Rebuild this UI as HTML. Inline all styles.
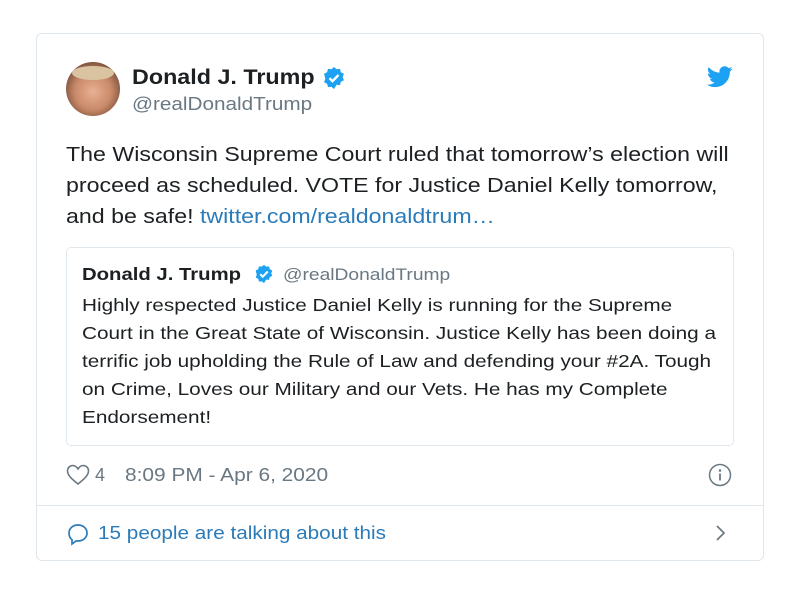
<!DOCTYPE html>
<html><head><meta charset="utf-8"><style>
body{margin:0;width:799px;height:595px;background:#fff;font-family:"Liberation Sans",sans-serif;position:relative;overflow:hidden}
.card{position:absolute;left:36px;top:33px;width:726px;height:526px;border:1px solid #e1e8ed;border-radius:6px}
.a{position:absolute;white-space:nowrap;transform-origin:0 0}
</style></head><body>
<div class="card"></div>
<div class="a" style="left:66px;top:62px;width:54px;height:54px;border-radius:50%;background:radial-gradient(circle at 50% 55%,#e8b193 0%,#c98a6a 45%,#8a5a44 70%,#5a4038 100%)"><div style="position:absolute;left:6px;top:4px;width:42px;height:14px;border-radius:50%;background:#d9c3a0"></div></div>
<div class="a" style="left:132px;top:66px;font-size:21px;font-weight:bold;color:#1c2022;transform:scaleX(1.11)">Donald J. Trump</div>
<svg class="a" style="left:322px;top:66px" width="24" height="24" viewBox="0 0 24 24"><path fill="#1da1f2" d="M12 1l2.6 2.2 3.4-.3.9 3.3 3 1.6-1.2 3.2 1.2 3.2-3 1.6-.9 3.3-3.4-.3L12 23l-2.6-2.2-3.4.3-.9-3.3-3-1.6 1.2-3.2L2.1 7.8l3-1.6.9-3.3 3.4.3z"/><path d="M7.5 12.2l3 3 6-6.2" stroke="#fff" stroke-width="2.4" fill="none"/></svg>
<div class="a" style="left:132px;top:94px;font-size:18px;color:#697882;transform:scaleX(1.15)">@realDonaldTrump</div>
<svg class="a" style="left:707px;top:66px" width="26" height="22" viewBox="0 0 24 20"><path fill="#1da1f2" d="M23.6 2.4c-.9.4-1.8.6-2.8.8 1-.6 1.8-1.6 2.1-2.7-.9.6-2 1-3.1 1.2C18.9.7 17.6.1 16.3.1c-2.7 0-4.8 2.2-4.8 4.8 0 .4 0 .8.1 1.1C7.5 5.8 4 3.9 1.6.9c-.4.7-.7 1.6-.7 2.4 0 1.7.9 3.2 2.2 4-.8 0-1.5-.2-2.2-.6v.1c0 2.3 1.7 4.3 3.9 4.7-.4.1-.8.2-1.3.2-.3 0-.6 0-.9-.1.6 1.9 2.4 3.3 4.5 3.4-1.7 1.3-3.7 2.1-6 2.1H0c2.1 1.4 4.7 2.2 7.4 2.2 8.9 0 13.7-7.4 13.7-13.7v-.6c1-.7 1.8-1.6 2.5-2.6z"/></svg>
<div class="a" style="left:66px;top:139px;font-size:20.5px;line-height:31px;color:#1c2022;transform:scaleX(1.13)">The Wisconsin Supreme Court ruled that tomorrow’s election will</div>
<div class="a" style="left:66px;top:170px;font-size:20.5px;line-height:31px;color:#1c2022;transform:scaleX(1.13)">proceed as scheduled. VOTE for Justice Daniel Kelly tomorrow,</div>
<div class="a" style="left:66px;top:201px;font-size:20.5px;line-height:31px;color:#1c2022;transform:scaleX(1.13)">and be safe! <span style="color:#2b7bb9">twitter.com/realdonaldtrum…</span></div>
<div class="a" style="left:66px;top:247px;width:666px;height:197px;border:1px solid #e1e8ed;border-radius:5px"></div>
<div class="a" style="left:82px;top:264px;font-size:17.5px;font-weight:bold;color:#1c2022;transform:scaleX(1.16)">Donald J. Trump</div>
<svg class="a" style="left:254px;top:264px" width="20" height="20" viewBox="0 0 24 24"><path fill="#1da1f2" d="M12 1l2.6 2.2 3.4-.3.9 3.3 3 1.6-1.2 3.2 1.2 3.2-3 1.6-.9 3.3-3.4-.3L12 23l-2.6-2.2-3.4.3-.9-3.3-3-1.6 1.2-3.2L2.1 7.8l3-1.6.9-3.3 3.4.3z"/><path d="M7.5 12.2l3 3 6-6.2" stroke="#fff" stroke-width="2.4" fill="none"/></svg>
<div class="a" style="left:283px;top:265px;font-size:17px;color:#697882;transform:scaleX(1.13)">@realDonaldTrump</div>
<div class="a" style="left:82px;top:291px;font-size:17.3px;line-height:28px;color:#1c2022;transform:scaleX(1.2)">Highly respected Justice Daniel Kelly is running for the Supreme</div>
<div class="a" style="left:82px;top:319px;font-size:17.3px;line-height:28px;color:#1c2022;transform:scaleX(1.2)">Court in the Great State of Wisconsin. Justice Kelly has been doing a</div>
<div class="a" style="left:82px;top:347px;font-size:17.3px;line-height:28px;color:#1c2022;transform:scaleX(1.2)">terrific job upholding the Rule of Law and defending your #2A. Tough</div>
<div class="a" style="left:82px;top:375px;font-size:17.3px;line-height:28px;color:#1c2022;transform:scaleX(1.2)">on Crime, Loves our Military and our Vets. He has my Complete</div>
<div class="a" style="left:82px;top:403px;font-size:17.3px;line-height:28px;color:#1c2022;transform:scaleX(1.2)">Endorsement!</div>
<svg class="a" style="left:66px;top:464px" width="24" height="22" viewBox="0 0 24 22"><path d="M12 20C5 14.5 1.5 11 1.5 6.8 1.5 3.8 3.8 1.5 6.7 1.5c2.2 0 4 1.4 5.3 3.4 1.3-2 3.1-3.4 5.3-3.4 2.9 0 5.2 2.3 5.2 5.3 0 4.2-3.5 7.7-10.5 13.2z" fill="none" stroke="#697882" stroke-width="1.6"/></svg>
<div class="a" style="left:95px;top:465px;font-size:18px;color:#697882">4</div>
<div class="a" style="left:125px;top:465px;font-size:18px;color:#697882;transform:scaleX(1.16)">8:09 PM - Apr 6, 2020</div>
<svg class="a" style="left:708px;top:463px" width="24" height="24" viewBox="0 0 24 24"><circle cx="12" cy="12" r="10.5" fill="none" stroke="#697882" stroke-width="1.5"/><circle cx="12" cy="7.5" r="1.3" fill="#697882"/><path d="M12 10.5v7" stroke="#697882" stroke-width="1.8"/></svg>
<div class="a" style="left:37px;top:505px;width:726px;height:1px;background:#e1e8ed"></div>
<svg class="a" style="left:66px;top:522px" width="24" height="24" viewBox="0 0 24 24"><path d="M12 3c5 0 9 3.4 9 8s-4 8-9 8c-.6 0-1.2 0-1.8-.1L6 22v-4.3C4 16.2 3 13.7 3 11c0-4.6 4-8 9-8z" fill="none" stroke="#2b7bb9" stroke-width="1.7"/></svg>
<div class="a" style="left:98px;top:522px;font-size:18.5px;color:#2b7bb9;transform:scaleX(1.12)">15 people are talking about this</div>
<svg class="a" style="left:712px;top:522px" width="16" height="22" viewBox="0 0 16 22"><path d="M5 4l7 7-7 7" fill="none" stroke="#697882" stroke-width="1.7"/></svg>
</body></html>
